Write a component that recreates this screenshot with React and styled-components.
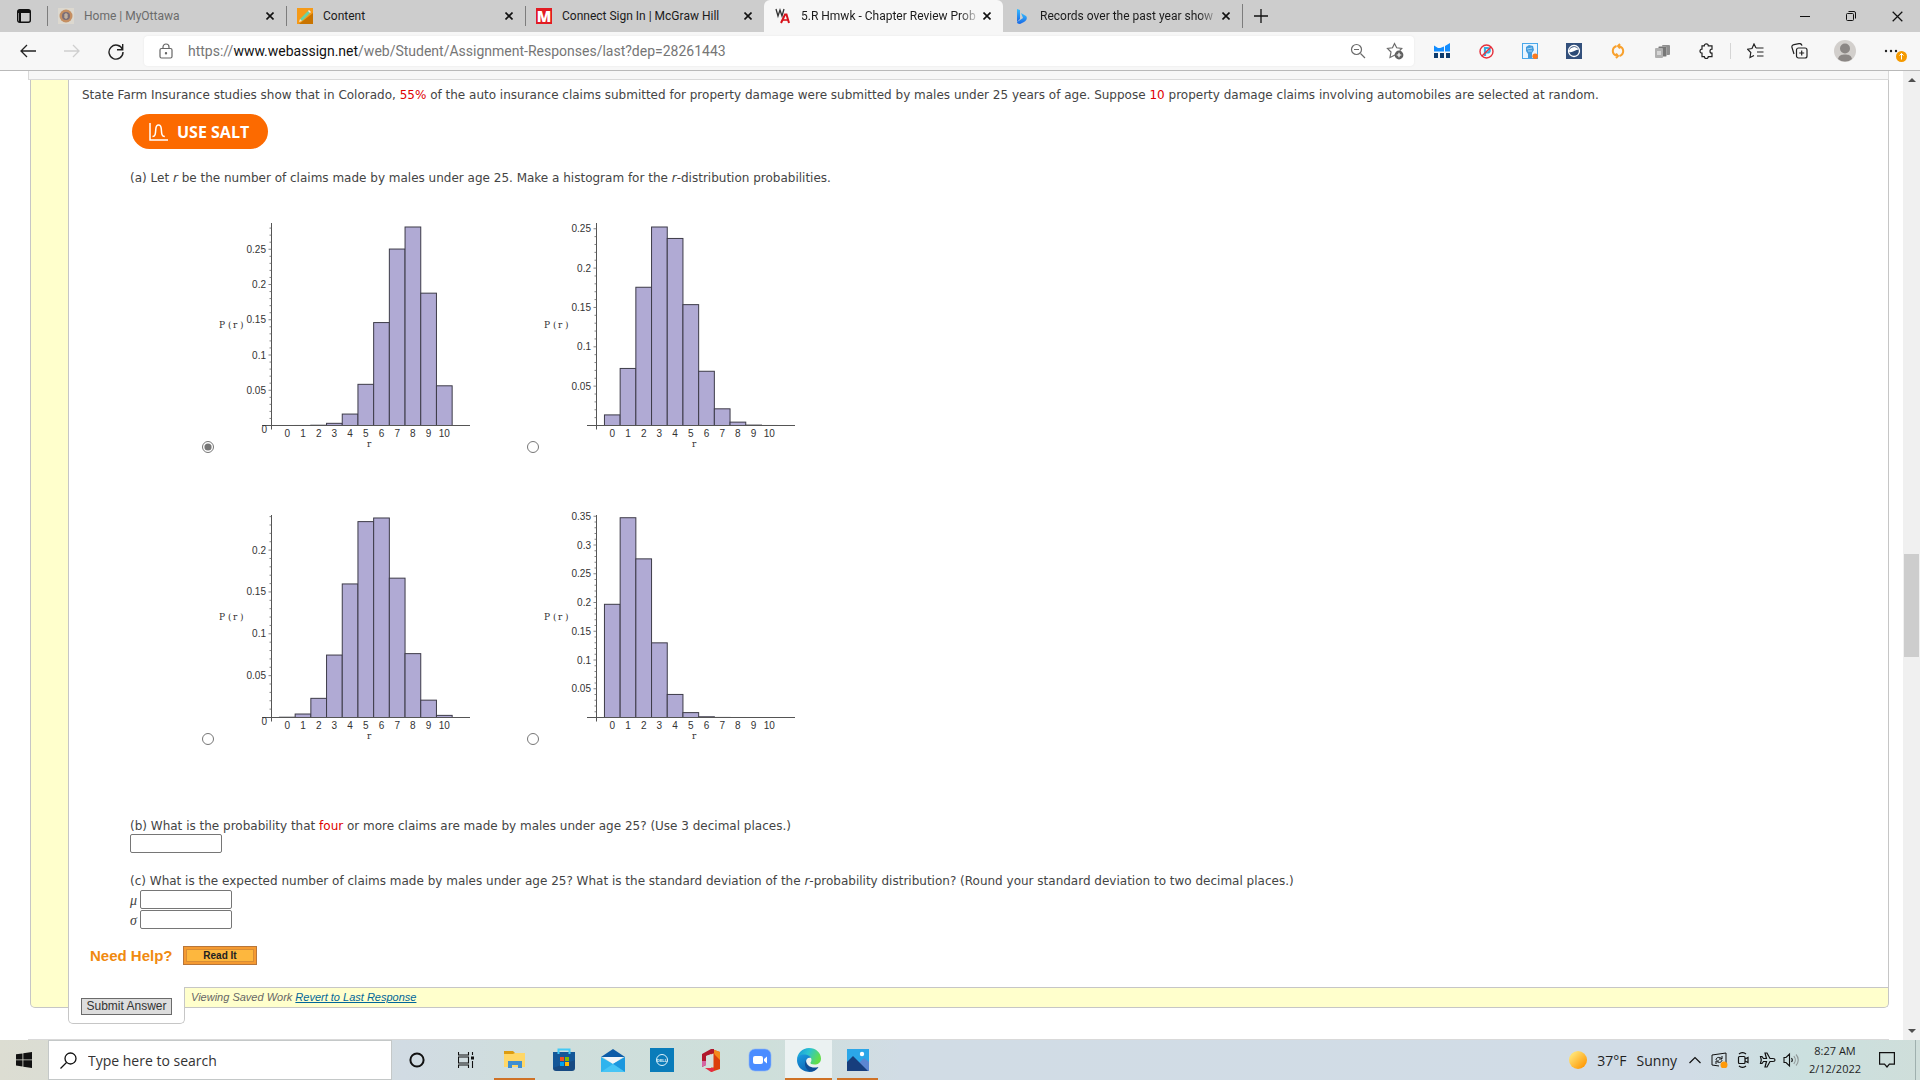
import React, { useState } from "react";
import styled, { createGlobalStyle } from "styled-components";

const GlobalStyle = createGlobalStyle`
  * {
    box-sizing: border-box;
  }
  body {
    margin: 0;
    background-color: white;
    font-family: "Open Sans", "Noto Sans", sans-serif;
  }
  button {
    font-family: inherit;
    padding: 0;
    border: none;
    background: none;
    cursor: pointer;
  }
  svg {
    display: block;
    flex-shrink: 0;
  }
`;

const Screen = styled.div`
  display: flex;
  flex-direction: column;
  min-height: 100vh;
`;

/* browser */
const TabStrip = styled.div`
  display: flex;
  align-items: center;
  height: 32px;
  background-color: #cdcdcd;
`;

const StripButton = styled.button`
  display: flex;
  align-items: center;
  justify-content: center;
  width: ${(props) => props.$width}px;
  height: 32px;
`;

const Tab = styled.div`
  display: flex;
  align-items: center;
  flex: 0 1 239px;
  min-width: 0;
  height: ${(props) => (props.$active ? "32px" : "20px")};
  padding: 0 10px;
  border-left: 1px solid ${(props) => (props.$line ? "#7d7d7d" : "transparent")};
  border-radius: ${(props) => (props.$active ? "6px 6px 0 0" : "0")};
  background-color: ${(props) => (props.$active ? "#f7f7f7" : "transparent")};
`;

const TabTitle = styled.button`
  flex: 1;
  min-width: 0;
  margin-left: 10px;
  overflow: hidden;
  white-space: nowrap;
  text-align: left;
  font-family: Roboto, sans-serif;
  font-size: 12px;
  line-height: 18px;
  color: ${(props) => (props.$dim ? "#6b6b6b" : "#1b1b1b")};
  mask-image: ${(props) =>
    props.$fade ? "linear-gradient(to right, black 88%, transparent)" : "none"};
`;

const CloseButton = styled.button`
  display: flex;
  align-items: center;
  justify-content: center;
  width: 12px;
  height: 16px;
`;

const NewTab = styled.div`
  display: flex;
  align-items: center;
  height: 24px;
  border-left: 1px solid #7d7d7d;
`;

const WindowButtons = styled.div`
  display: flex;
  margin-left: auto;
`;

const Toolbar = styled.div`
  display: flex;
  align-items: center;
  height: 39px;
  padding: 0 7px 0 6px;
  background-color: #f7f7f7;
  border-bottom: 1px solid #b9b9b9;
`;

const ToolButton = styled.button`
  position: relative;
  display: flex;
  align-items: center;
  justify-content: center;
  width: ${(props) => (props.$wide ? "48px" : "44px")};
  height: 32px;
`;

const AddressBar = styled.div`
  display: flex;
  align-items: center;
  flex: 1;
  height: 30px;
  margin: 0 6px;
  padding: 0 10px 0 15px;
  border-radius: 4px;
  background-color: white;
  box-shadow: 0 0 2px #e4e4e4;
`;

const Url = styled.div`
  flex: 1;
  margin-left: 15px;
  font-family: Roboto, sans-serif;
  font-size: 14px;
  line-height: 20px;
  color: #767676;

  b {
    font-weight: normal;
    color: #111;
  }
`;

const AddressButton = styled.button`
  width: 18px;
  margin-left: 18px;
`;

const ToolDivider = styled.div`
  width: 1px;
  height: 16px;
  margin: 0 2px;
  background-color: #d5d5d5;
`;

const UpdateBadge = styled.span`
  position: absolute;
  right: 6px;
  bottom: 5px;
`;

/* page */
const Viewport = styled.div`
  display: flex;
  flex: 1;
`;

const Page = styled.main`
  display: flex;
  flex-direction: column;
  flex: 1;
  min-width: 0;
  padding: 0 14px 0 28px;
  font-family: Verdana, "DejaVu Sans", sans-serif;
  font-size: 12px;
  line-height: 16px;
  color: #444;
`;

const QuestionHeader = styled.div`
  height: 9px;
  background-color: #f7f7f7;
  border: 1px solid #d9d9d9;
  border-top: none;
`;

const Question = styled.section`
  margin: 0 0 16px 2px;
  padding-left: 37px;
  border: 1px solid #c6c6c6;
  border-top: none;
  border-radius: 0 0 5px 5px;
  background-color: #ffffcc;
`;

const Panel = styled.div`
  padding: 7px 0 22px 13px;
  border-left: 1px solid #c6c6c6;
  background-color: white;
`;

const Indent = styled.div`
  padding-left: 48px;
`;

const Text = styled.p`
  margin: ${(props) => props.$top || 0}px 0 0;
`;

const Red = styled.span`
  color: #e00000;
`;

const SaltButton = styled.button`
  display: flex;
  align-items: center;
  width: 136px;
  height: 35px;
  margin: 11px 0 0 2px;
  padding-left: 17px;
  border-radius: 18px;
  background-color: #fc6a00;
  font-family: "Open Sans", sans-serif;
  font-size: 16px;
  line-height: 20px;
  font-weight: bold;
  color: white;

  svg {
    margin-right: 9px;
  }
`;

const Choices = styled.div`
  display: grid;
  grid-template-columns: 325px 325px;
  row-gap: 50px;
  margin: 25px 0 73px 72px;
`;

const Choice = styled.label`
  display: flex;
  align-items: flex-end;
`;

const Radio = styled.input`
  width: 12px;
  height: 12px;
  margin: 0 2px 0 0;
  accent-color: #767676;
`;

const Answer = styled.input`
  display: block;
  width: 92px;
  height: 19px;
  border: 1px solid #767676;
  border-radius: 2px;
  padding: 1px 2px;
  font-size: 12px;
  background-color: white;
`;

const SymbolRow = styled.div`
  display: flex;
  align-items: center;
  height: 20px;
`;

const Symbol = styled.label`
  width: 10px;
  padding-top: 4px;
  font-family: "Liberation Serif", serif;
  font-style: italic;
  font-size: 14px;
`;

const Help = styled.div`
  display: flex;
  align-items: center;
  margin: 17px 0 0 8px;
  height: 19px;
`;

const HelpTitle = styled.span`
  width: 93px;
  font-family: "Liberation Sans", Arial, sans-serif;
  font-size: 15px;
  font-weight: bold;
  color: #f08a10;
`;

const ReadButton = styled.button`
  width: 74px;
  height: 19px;
  border: 1px solid #b8763a;
  background-color: #fdb73e;
  box-shadow: inset 0 0 0 2px #f59a31, inset 0 0 0 3px #d98d34;
  font-family: "Liberation Sans", Arial, sans-serif;
  font-size: 10px;
  font-weight: bold;
  color: #222;
`;

const QuestionFooter = styled.div`
  display: flex;
  align-items: flex-start;
  height: 20px;
`;

const SubmitArea = styled.div`
  width: 117px;
  height: 37px;
  padding: 11px 12px 0;
  border: 1px solid #c6c6c6;
  border-top: none;
  border-radius: 0 0 5px 5px;
  background-color: white;
`;

const SubmitButton = styled.button`
  width: 91px;
  height: 17px;
  border: 1px solid #6b6b6b;
  background-color: #dddddd;
  font-family: "Liberation Sans", Arial, sans-serif;
  font-size: 12px;
  line-height: 15px;
  color: #333;
`;

const SavedWork = styled.div`
  flex: 1;
  height: 20px;
  padding: 1px 6px 0;
  border-top: 1px solid #c6c6c6;
  font-family: "Liberation Sans", Arial, sans-serif;
  font-style: italic;
  font-size: 11px;
  color: #666;

  a {
    color: #006699;
  }
`;

const NextQuestion = styled.div`
  height: 1px;
  margin-top: auto;
  background-color: #d9d9d9;
`;

const Scrollbar = styled.div`
  display: grid;
  grid-template-rows: 17px 466fr 103fr 366fr 17px;
  justify-items: center;
  align-items: center;
  width: 17px;
  background-color: #f0f0f0;
`;

const Thumb = styled.div`
  grid-row: 3;
  width: 15px;
  height: 100%;
  background-color: #cdcdcd;
`;

const ArrowDown = styled.svg`
  grid-row: 5;
`;

/* taskbar */
const Taskbar = styled.footer`
  display: flex;
  align-items: stretch;
  height: 40px;
  background: linear-gradient(
    to right,
    #dcddd2 0%,
    #d3dbdc 19%,
    #d1dbe3 21%,
    #cfdedc 28%,
    #cedfda 40%,
    #d1dce5 47%,
    #d1dce6 88%,
    #cbe0df 94%,
    #cfdeda 100%
  );
  color: #1f1f1f;
`;

const TaskButton = styled.button`
  display: flex;
  align-items: center;
  justify-content: center;
  width: 49px;
  border-top: 2px solid transparent;
  border-bottom: 2px solid transparent;
  background: ${(props) => (props.$active ? "#ebf2f2" : "none")};
  ${(props) =>
    props.$open &&
    `
    width: ${props.$active ? 47 : 41}px;
    margin: 0 ${props.$active ? 1 : 4}px;
    border-bottom-color: #cf7226;
  `}
`;

const StartButton = styled(TaskButton)`
  width: 48px;
`;

const SearchBox = styled.label`
  display: flex;
  align-items: center;
  width: 344px;
  padding-left: 11px;
  border: 1px solid #c4c8c8;
  background-color: white;
`;

const SearchInput = styled.input`
  flex: 1;
  min-width: 0;
  margin-left: 9px;
  border: none;
  outline: none;
  font-family: "Open Sans", "Noto Sans", sans-serif;
  font-size: 14px;

  &::placeholder {
    color: #333;
    opacity: 1;
  }
`;

const Tray = styled.div`
  display: flex;
  align-items: center;
  margin-left: auto;
`;

const Weather = styled.button`
  display: flex;
  align-items: center;
  gap: 10px;
  margin-right: 6px;
  font-size: 14px;
  color: #1f1f1f;
`;

const TrayButton = styled.button`
  display: flex;
  justify-content: center;
  width: 24px;
`;

const Clock = styled.div`
  width: 64px;
  margin-right: 8px;
  font-size: 11px;
  line-height: 18px;
  text-align: center;
`;

const ShowDesktop = styled.div`
  width: 5px;
  height: 40px;
  margin-left: 16px;
  border-left: 1px solid #9fb0ae;
`;

const CloseIcon = ({ size = 8, weight = 1.6 }) => (
  <svg width={size} height={size} viewBox="0 0 8 8">
    <path d="M0.5 0.5L7.5 7.5M7.5 0.5L0.5 7.5" stroke="#111" strokeWidth={weight} />
  </svg>
);

const SealIcon = () => (
  <svg width="16" height="16" viewBox="0 0 16 16">
    <rect width="16" height="16" fill="#dcd8cf" />
    <circle cx="8" cy="8" r="6.5" fill="#c58f62" />
    <circle cx="8" cy="8" r="4" fill="#7b6e78" />
    <path d="M8 5v6M6 7h4M6 9h4" stroke="#d9c5a8" />
  </svg>
);

const PencilIcon = () => (
  <svg width="16" height="16" viewBox="0 0 16 16">
    <rect width="16" height="16" fill="#f59a18" />
    <path d="M16 5v11H2z" fill="#c97400" />
    <path d="M3 11l8-8 2 2-8 8z" fill="#67d3a4" />
    <path d="M3 11l2 2-3 1z" fill="#f5e6c8" />
    <path d="M11 3l1-1 2 2-1 1z" fill="#eee" />
  </svg>
);

const LetterM = styled.span`
  width: 16px;
  height: 16px;
  flex-shrink: 0;
  background-color: #e21b22;
  color: white;
  font-size: 15px;
  line-height: 16px;
  font-weight: 800;
  text-align: center;
`;

const WebAssignIcon = () => (
  <svg width="16" height="16" viewBox="0 0 16 16" fill="none">
    <path d="M1 1l2 7 2-6 2 6 2-7" stroke="#333" strokeWidth="1.3" />
    <path d="M6 15L10 6.500h1.500L14 15" stroke="#d8121a" strokeWidth="2" />
    <path d="M8 12h5" stroke="#d8121a" strokeWidth="1.600" />
  </svg>
);

const BingIcon = () => (
  <svg width="16" height="16" viewBox="0 0 16 16">
    <defs>
      <linearGradient id="bing" x1="0" y1="0" x2="0" y2="1">
        <stop offset="0" stopColor="#37bdff" />
        <stop offset="1" stopColor="#1867e6" />
      </linearGradient>
    </defs>
    <path d="M3 1l3 1v9l-3 3z" fill="url(#bing)" />
    <path d="M7 5l5 3c2 2 0 5-2 6l-4 2c-2 0-3-1-3-2l6-4z" fill="url(#bing)" />
  </svg>
);

const AppIcons = {
  bars: (
    <svg width="16" height="16" viewBox="0 0 16 16">
      <path d="M0 2.500l4 2.500V8.500H0zM5 5.500l5-2v5H5zM4 5h2v3.500H4zM11 3l5-3v8.500h-5z" fill="#128dff" />
      <path d="M0 10h4v5H0zM6 10h4v5H6zM12 10h4v5h-4z" fill="#0c3b6e" />
    </svg>
  ),
  blocked: (
    <svg width="15" height="15" viewBox="0 0 15 15" fill="none">
      <path d="M6 12V4h2.500a2 2 0 0 1 0 4.500H6" stroke="#35aee2" strokeWidth="2.200" />
      <circle cx="7.500" cy="7.500" r="6.500" stroke="#e5303c" strokeWidth="1.400" />
      <path d="M12 3L3 12" stroke="#e5303c" strokeWidth="1.400" />
    </svg>
  ),
  fist: (
    <svg width="16" height="16" viewBox="0 0 16 16">
      <rect x="0.500" y="0.500" width="15" height="15" fill="#e9f5ff" stroke="#4aa8ea" />
      <path d="M4 4l3-2 4 1 1 4-2 3v5H6v-4L4 8z" fill="#459ddd" />
      <path d="M5 6l5-1M6 8l4 0" stroke="#d8eefc" strokeWidth="0.700" />
      <circle cx="13.200" cy="13.200" r="2.800" fill="#fb7a1e" />
    </svg>
  ),
  globe: (
    <svg width="16" height="16" viewBox="0 0 16 16">
      <rect width="16" height="16" fill="#33507c" />
      <circle cx="8" cy="8" r="5.500" fill="#2c4a75" stroke="white" strokeWidth="1.300" />
      <path d="M2.800 8.500c3 2.500 5.500-2 10-2a5.500 5.500 0 0 0-10 2z" fill="white" />
    </svg>
  ),
  ring: (
    <svg width="16" height="16" viewBox="0 0 16 16" fill="none" stroke="#f8a12e" strokeWidth="2">
      <path d="M6.500 3C3.800 4 2.800 6 2.800 8s1 4 4.500 5M6 10.500L8 13l-2 2M9.500 13c2.700-1 3.700-3 3.700-5s-1-4-4.500-5M10 5.500L8 3l2-2" />
    </svg>
  ),
  docs: (
    <svg width="15" height="15" viewBox="0 0 15 15">
      <rect x="7" y="1" width="8" height="10" rx="1" fill="#8f8f8f" />
      <rect x="3.500" y="2.500" width="8" height="10" rx="1" fill="#777" stroke="#b8b8b8" strokeWidth="0.600" />
      <rect x="0" y="4" width="8" height="10" rx="1" fill="#b0b0b0" />
      <path d="M2 7h4v4H2z" fill="#d6d6d6" />
    </svg>
  ),
  puzzle: (
    <svg width="16" height="16" viewBox="0 0 16 16" fill="none" stroke="#222" strokeWidth="1.200">
      <path d="M4 2.800h2.300a2 2 0 0 1 4 0H14v3.400a2 2 0 0 0 0 4v3.400h-3.700a2 2 0 0 1-4 0H4v-3.400a2 2 0 0 1 0-4z" />
    </svg>
  ),
  favorites: (
    <svg width="17" height="16" viewBox="0 0 17 16" fill="none" stroke="#222" strokeWidth="1.200">
      <path d="M9 5L7 1 5 5.500l-4.500.700 3.300 3.300L3 14.500l4-2M9 5h7.500M10 9h6.500M10 13h6.500" />
    </svg>
  ),
  collections: (
    <svg width="17" height="16" viewBox="0 0 17 16" fill="none" stroke="#222" strokeWidth="1.200">
      <rect x="5.500" y="5" width="10.500" height="10" rx="2" />
      <path d="M10.700 7.500v5M8.200 10h5M3 11L1 4.500C.5 3 1.500 2 3 1.600l5-1c1.500-.300 2.500 0 3 2" />
    </svg>
  ),
};

const Avatar = () => (
  <svg width="22" height="22" viewBox="0 0 22 22">
    <circle cx="11" cy="11" r="11" fill="#d2cfcc" />
    <circle cx="11" cy="8.500" r="5" fill="#8b8785" />
    <path d="M4 19c1-4 4-4.500 7-4.500s6 .500 7 4.500a11 11 0 0 1-14 0z" fill="#8b8785" />
  </svg>
);

// each chart covers r = 0..10, scale is pixels per unit of probability
const charts = [
  { p: 0.75, scale: 705, zero: true },
  { p: 0.35, scale: 787, zero: false },
  { p: 0.55, scale: 837, zero: true },
  { p: 0.15, scale: 575, zero: false },
];

const binomial = (n, k, p) => {
  let value = Math.pow(p, k) * Math.pow(1 - p, n - k);
  for (let i = 1; i <= k; i++) {
    value = (value * (n - k + i)) / i;
  }
  return value;
};

const Histogram = ({ p, scale, zero }) => {
  const base = 214.5;
  const axis = 55.5;
  const step = 15.7;
  const first = 71.3;
  const bars = Array.from({ length: 11 }, (_, r) => binomial(10, r, p));
  const ticks = Array.from({ length: 40 }, (_, i) => i + 1).filter(
    (i) => base - (i * scale) / 100 > 12
  );

  return (
    <svg width="280" height="242" viewBox="0 0 280 242" fontSize="10" fill="#333" fontFamily="Liberation Sans">
      {bars.map((value, r) => (
        <rect
          key={r}
          x={first + (r - 0.5) * step}
          y={base - value * scale}
          width={step}
          height={value * scale}
          fill="#b0aad4"
          stroke="#3d3b48"
        />
      ))}
      <path d={`M${axis} 12V${base + 4}M46 ${base}H254`} stroke="#555" />
      {ticks.map((i) => (
        <path
          key={i}
          d={`M${axis} ${base - (i * scale) / 100}h${i % 5 === 0 ? -3 : -2}`}
          stroke="#666"
          strokeWidth="0.800"
        />
      ))}
      {ticks
        .filter((i) => i % 5 === 0)
        .map((i) => (
          <text key={i} x="50" y={base + 3.5 - (i * scale) / 100} textAnchor="end">
            {i / 100}
          </text>
        ))}
      {zero && (
        <text x="51" y="222" textAnchor="end">
          0
        </text>
      )}
      {bars.map((_, r) => (
        <text key={r} x={first + r * step} y="226" textAnchor="middle">
          {r}
        </text>
      ))}
      <g fontFamily="DejaVu Serif" fontSize="9">
        <text x="3" y="117">P</text>
        <text x="12 17 24" y="117">(r)</text>
        <text x="151" y="236">r</text>
      </g>
    </svg>
  );
};

const TaskIcons = {
  start: (
    <svg width="16" height="16" viewBox="0 0 16 16">
      <path d="M0 2.300L6.500 1.400V7.500H0zM7.300 1.300L16 0v7.500H7.300zM0 8.300h6.500v6.200L0 13.600zM7.300 8.300H16V16l-8.700-1.300z" fill="#111" />
    </svg>
  ),
  cortana: (
    <svg width="16" height="16" viewBox="0 0 16 16">
      <circle cx="8" cy="8" r="6.600" fill="none" stroke="#111" strokeWidth="2" />
    </svg>
  ),
  view: (
    <svg width="16" height="16" viewBox="0 0 16 16" fill="none" stroke="#111" strokeWidth="1.100">
      <path d="M.5 0v3h10V0M.5 16v-3h10v3M.5 5h10v6H.5zM14.500 0v3M14.500 9v7" />
      <path d="M13 4.500h3v3h-3z" fill="#111" stroke="none" />
    </svg>
  ),
  folder: (
    <svg width="22" height="20" viewBox="0 0 22 20">
      <path d="M0 1h9l2 2h10v6H0z" fill="#dc9c12" />
      <path d="M0 4h9l2-1h10v14H0z" fill="#ffd767" />
      <path d="M4 11h14v7h-4v-3H8v3H4z" fill="#3f8fd2" />
    </svg>
  ),
  store: (
    <svg width="24" height="24" viewBox="0 0 24 24">
      <path d="M1 4h22v16a3 3 0 0 1-3 3H4a3 3 0 0 1-3-3z" fill="#174a82" />
      <path d="M1 4h22v8L1 20z" fill="#1260a7" opacity=".600" />
      <path d="M8 9h4v4H8z" fill="#f25022" />
      <path d="M13 9h4v4h-4z" fill="#7fba00" />
      <path d="M8 14h4v4H8z" fill="#00a4ef" />
      <path d="M13 14h4v4h-4z" fill="#ffb900" />
      <path d="M6.500 6V1.500h11V6" fill="none" stroke="#43c9f5" strokeWidth="2" />
    </svg>
  ),
  mail: (
    <svg width="24" height="23" viewBox="0 0 24 23">
      <path d="M0 8L12 0l12 8z" fill="#0d5ca8" />
      <path d="M2 8h20l-10 7z" fill="#f4f7fa" />
      <path d="M0 8l12 7 12-7v15H0z" fill="#2fb4ee" />
      <path d="M24 8v15L12 15z" fill="#1c97de" />
      <path d="M0 23l12-8 12 8z" fill="#47c5f5" />
    </svg>
  ),
  dell: (
    <svg width="24" height="24" viewBox="0 0 24 24">
      <rect width="24" height="24" fill="#0a7cba" />
      <circle cx="12" cy="12" r="5.500" fill="none" stroke="#e0f2fb" />
      <text x="12" y="13.500" fontSize="4" fontWeight="bold" textAnchor="middle" fill="#e0f2fb" fontFamily="Liberation Sans">DELL</text>
    </svg>
  ),
  office: (
    <svg width="18" height="23" viewBox="0 0 18 23">
      <path d="M9 0l9 3v17l-9 3z" fill="#dc3e0b" />
      <path d="M10 0l8 3v8l-5-5z" fill="#f48a1c" />
      <path d="M9 0L0 5v13l4-2V7l8-3V0z" fill="#b1172b" />
      <path d="M0 12v6l4-2v-4z" fill="#d565a3" />
      <path d="M3 19h9v3l-3 1z" fill="#e62c44" />
      <path d="M4.500 7l7-2.500v14h-7z" fill="#d5dfdc" />
    </svg>
  ),
  zoom: (
    <svg width="24" height="24" viewBox="0 0 24 24">
      <rect x="1" y="1" width="22" height="22" rx="6" fill="#4a8cff" stroke="#8db5f5" strokeWidth=".600" />
      <rect x="5" y="8" width="10" height="8" rx="2" fill="white" />
      <path d="M16 11l3-2.500v7L16 13z" fill="white" />
    </svg>
  ),
  edge: (
    <svg width="24" height="24" viewBox="0 0 24 24">
      <defs>
        <linearGradient id="edgeTop" x1="0" y1="0" x2="1" y2="0.400">
          <stop offset="0" stopColor="#1493d8" />
          <stop offset="0.500" stopColor="#2cc3d2" />
          <stop offset="1" stopColor="#62de4c" />
        </linearGradient>
        <linearGradient id="edgeBody" x1="0" y1="0" x2="0.600" y2="1">
          <stop offset="0" stopColor="#1b9de2" />
          <stop offset="1" stopColor="#0c62b0" />
        </linearGradient>
      </defs>
      <path d="M0 12C0 5 5.500 0 12 0c7 0 12 5 12 10.500 0 4-3 6-6.500 6-3 0-4.500-1-4-2 2-2 1-7-4-7C5 7.500 1 9 0 12z" fill="url(#edgeTop)" />
      <path d="M0 12c.500-4 4-6 8.500-5.500 3 .300 5 2 5.500 3.500-3-1-5 1-5 4 0 5 5 8 12 5.500C17 25 11 24.500 7 22.800 2 20.500 0 16 0 12z" fill="url(#edgeBody)" />
      <path d="M9 12c-3 5 1 11 5 11.500 3 0 6-2 7.500-4.500C15 21 9 18 9 12z" fill="#104e96" />
    </svg>
  ),
  photos: (
    <svg width="22" height="22" viewBox="0 0 22 22">
      <rect width="22" height="22" fill="#2ba6e8" />
      <path d="M11 15l6-6 5 4v9H11z" fill="#5c86d2" />
      <path d="M0 13l6-6 15 15H0z" fill="#173e7d" />
      <circle cx="15" cy="5" r="2.200" fill="white" />
    </svg>
  ),
};

const trayIcons = [
  {
    name: "Show hidden icons",
    icon: (
      <svg width="14" height="16" viewBox="0 0 14 16" fill="none" stroke="#111" strokeWidth="1.200">
        <path d="M1.500 11L7 5.500l5.500 5.500" />
      </svg>
    ),
  },
  {
    name: "Updates",
    icon: (
      <svg width="17" height="16" viewBox="0 0 17 16" fill="none" stroke="#111">
        <path d="M1 3l14-2v10M8 14l-7-1V3" />
        <path d="M5 8c0-3 4-3.500 6-1M11 4v3H8M11 8c0 2-3 3.500-5 1.500M5 12V9h3" />
        <circle cx="13" cy="13" r="3.500" fill="#ff9a0a" stroke="none" />
      </svg>
    ),
  },
  {
    name: "Meet Now",
    icon: (
      <svg width="12" height="16" viewBox="0 0 12 16" fill="none" stroke="#111" strokeWidth="1.200">
        <rect x="1.500" y="4.500" width="6.500" height="7" rx="1" />
        <path d="M8 7l3-1.500v5L8 9M2 2c2-1.600 5-1.600 7 0M2 14c2 1.600 5 1.600 7 0" />
      </svg>
    ),
  },
  {
    name: "Airplane mode",
    icon: (
      <svg width="17" height="16" viewBox="0 0 17 16" fill="none" stroke="#111" strokeWidth="1.200">
        <path d="M16 8c0 1-1 1.500-2 1.500h-3L8 15H6l1.500-5.500h-3L3 11.500H1.500L2.300 8l-.8-3.500H3l1.500 2h3L6 1h2l3 5.500h3c1 0 2 .5 2 1.500z" />
      </svg>
    ),
  },
  {
    name: "Volume",
    icon: (
      <svg width="17" height="16" viewBox="0 0 17 16" fill="none" stroke="#111" strokeWidth="1.100">
        <path d="M1 5.500h2L6.500 2v12L3 10.500H1zM8.500 6c1 1.200 1 2.800 0 4" />
        <path d="M10.800 4.200c2 2.200 2 5.400 0 7.600M13 2.500c3 3.200 3 7.800 0 11" stroke="#909898" />
      </svg>
    ),
  },
];

const tabs = [
  { title: "Home | MyOttawa", icon: <SealIcon />, dim: true, line: true },
  { title: "Content", icon: <PencilIcon />, line: true },
  { title: "Connect Sign In | McGraw Hill", icon: <LetterM>M</LetterM>, line: true },
  { title: "5.R Hmwk - Chapter Review Prob", icon: <WebAssignIcon />, active: true, fade: true },
  { title: "Records over the past year show", icon: <BingIcon />, fade: true },
];

const taskApps = [
  { name: "Cortana", icon: TaskIcons.cortana },
  { name: "Task View", icon: TaskIcons.view },
  { name: "File Explorer", icon: TaskIcons.folder, open: true },
  { name: "Microsoft Store", icon: TaskIcons.store },
  { name: "Mail", icon: TaskIcons.mail },
  { name: "Dell", icon: TaskIcons.dell },
  { name: "Office", icon: TaskIcons.office },
  { name: "Zoom", icon: TaskIcons.zoom },
  { name: "Microsoft Edge", icon: TaskIcons.edge, open: true, active: true },
  { name: "Photos", icon: TaskIcons.photos, open: true },
];

const Browser = () => (
  <header>
    <TabStrip>
      <StripButton $width={47} aria-label="Tab actions">
        <svg width="14" height="14" viewBox="0 0 14 14">
          <rect x="0.700" y="0.700" width="12.600" height="12.600" rx="2" fill="none" stroke="#111" strokeWidth="1.400" />
          <path d="M1 1h12v3H4v9H2V4H1z" fill="#111" />
        </svg>
      </StripButton>
      {tabs.map((tab) => (
        <Tab key={tab.title} $active={tab.active} $line={tab.line}>
          {tab.icon}
          <TabTitle $dim={tab.dim} $fade={tab.fade}>{tab.title}</TabTitle>
          <CloseButton aria-label="Close tab">
            <CloseIcon />
          </CloseButton>
        </Tab>
      ))}
      <NewTab>
        <StripButton $width={36} aria-label="New tab">
          <svg width="14" height="14" viewBox="0 0 14 14">
            <path d="M7 0v14M0 7h14" stroke="#111" strokeWidth="1.300" />
          </svg>
        </StripButton>
      </NewTab>
      <WindowButtons>
        <StripButton $width={46} aria-label="Minimize">
          <svg width="10" height="10" viewBox="0 0 10 10">
            <path d="M0 5.500h10" stroke="#111" />
          </svg>
        </StripButton>
        <StripButton $width={46} aria-label="Restore">
          <svg width="10" height="10" viewBox="0 0 10 10" fill="none" stroke="#111">
            <rect x="0.500" y="2.500" width="7" height="7" rx="1" />
            <path d="M2.500 .5H8a1.500 1.500 0 0 1 1.500 1.500v5.500" />
          </svg>
        </StripButton>
        <StripButton $width={46} aria-label="Close">
          <CloseIcon size={11} weight={0.9} />
        </StripButton>
      </WindowButtons>
    </TabStrip>
    <Toolbar>
      <ToolButton aria-label="Back">
        <svg width="16" height="14" viewBox="0 0 16 14" fill="none" stroke="#222" strokeWidth="1.300">
          <path d="M16 7H1M7 1L1 7l6 6" />
        </svg>
      </ToolButton>
      <ToolButton aria-label="Forward">
        <svg width="16" height="14" viewBox="0 0 16 14" fill="none" stroke="#cfcfcf" strokeWidth="1.300">
          <path d="M0 7h15M9 1l6 6-6 6" />
        </svg>
      </ToolButton>
      <ToolButton aria-label="Refresh">
        <svg width="16" height="17" viewBox="0 0 16 17" fill="none" stroke="#222" strokeWidth="1.400">
          <path d="M14.500 6.500A7 7 0 1 0 15 9M14.700 1v5.700H9" />
        </svg>
      </ToolButton>
      <AddressBar>
        <svg width="14" height="16" viewBox="0 0 14 16" fill="none" stroke="#666" strokeWidth="1.200">
          <rect x="1" y="5.500" width="12" height="9.500" rx="1.500" />
          <path d="M4 5.500V4a3 3 0 0 1 6 0v1.500" />
          <circle cx="7" cy="10.200" r="0.600" fill="#666" />
        </svg>
        <Url>
          https://<b>www.webassign.net</b>/web/Student/Assignment-Responses/last?dep=28261443
        </Url>
        <AddressButton aria-label="Zoom">
          <svg width="16" height="16" viewBox="0 0 16 16" fill="none" stroke="#6b6b6b" strokeWidth="1.200">
            <circle cx="6.500" cy="6.500" r="5" />
            <path d="M10.500 10.500L15 15M4 6.500h5" />
          </svg>
        </AddressButton>
        <AddressButton aria-label="Add to favorites">
          <svg width="18" height="18" viewBox="0 0 18 18" fill="none" stroke="#6b6b6b" strokeWidth="1.200">
            <path d="M9 13l-5 2.500 1-5.500L1.500 6.500l5-.700L8.500 1.500l2.200 4.300 5 .700-2 2" />
            <circle cx="13" cy="13" r="4.400" fill="#606060" stroke="none" />
            <path d="M13 10.700v4.600M10.700 13h4.600" stroke="white" />
          </svg>
        </AddressButton>
      </AddressBar>
      {["bars", "blocked", "fist", "globe", "ring", "docs", "puzzle"].map((name) => (
        <ToolButton key={name} aria-label={name}>
          {AppIcons[name]}
        </ToolButton>
      ))}
      <ToolDivider />
      <ToolButton aria-label="Favorites">{AppIcons.favorites}</ToolButton>
      <ToolButton aria-label="Collections">{AppIcons.collections}</ToolButton>
      <ToolButton $wide aria-label="Profile">
        <Avatar />
      </ToolButton>
      <ToolButton aria-label="Settings">
        <svg width="14" height="4" viewBox="0 0 14 4" fill="#222">
          <circle cx="2" cy="2" r="1.200" />
          <circle cx="7" cy="2" r="1.200" />
          <circle cx="12" cy="2" r="1.200" />
        </svg>
        <UpdateBadge>
          <svg width="11" height="11" viewBox="0 0 11 11">
            <circle cx="5.500" cy="5.500" r="5.500" fill="#f59a00" />
            <path d="M5.500 8.500v-6M3.500 4.500l2-2 2 2" stroke="white" fill="none" />
          </svg>
        </UpdateBadge>
      </ToolButton>
    </Toolbar>
  </header>
);

const App = () => {
  const [choice, setChoice] = useState(0);

  return (
    <Screen>
      <GlobalStyle />
      <Browser />
      <Viewport>
        <Page>
          <QuestionHeader />
          <Question>
            <Panel>
              <Text>
                State Farm Insurance studies show that in Colorado, <Red>55%</Red> of the auto insurance
                claims submitted for property damage were submitted by males under 25 years of age. Suppose{" "}
                <Red>10</Red> property damage claims involving automobiles are selected at random.
              </Text>
              <Indent>
                <SaltButton>
                  <svg width="19" height="18" viewBox="0 0 19 18" fill="none" stroke="white" strokeWidth="1.500">
                    <path d="M1 0v17h18M3.500 13.500c3 0 3-3 3.300-7.500.300-5.500 5.200-5.500 5.500 0 .300 4.500.300 7.500 3.500 7.500" />
                  </svg>
                  USE SALT
                </SaltButton>
                <Text $top={21}>
                  (a) Let <i>r</i> be the number of claims made by males under age 25. Make a histogram for
                  the <i>r</i>-distribution probabilities.
                </Text>
                <Choices>
                  {charts.map((chart, index) => (
                    <Choice key={chart.p}>
                      <Radio
                        type="radio"
                        name="histogram"
                        checked={choice === index}
                        onChange={() => setChoice(index)}
                      />
                      <Histogram {...chart} />
                    </Choice>
                  ))}
                </Choices>
                <Text as="label" htmlFor="partB">
                  (b) What is the probability that <Red>four</Red> or more claims are made by males under age
                  25? (Use 3 decimal places.)
                </Text>
                <Answer id="partB" type="text" />
                <Text $top={20}>
                  (c) What is the expected number of claims made by males under age 25? What is the standard
                  deviation of the <i>r</i>-probability distribution? (Round your standard deviation to two
                  decimal places.)
                </Text>
                <SymbolRow>
                  <Symbol htmlFor="mu">μ</Symbol>
                  <Answer id="mu" type="text" />
                </SymbolRow>
                <SymbolRow>
                  <Symbol htmlFor="sigma">σ</Symbol>
                  <Answer id="sigma" type="text" />
                </SymbolRow>
              </Indent>
              <Help>
                <HelpTitle>Need Help?</HelpTitle>
                <ReadButton>Read It</ReadButton>
              </Help>
            </Panel>
            <QuestionFooter>
              <SubmitArea>
                <SubmitButton>Submit Answer</SubmitButton>
              </SubmitArea>
              <SavedWork>
                Viewing Saved Work <a href="#last">Revert to Last Response</a>
              </SavedWork>
            </QuestionFooter>
          </Question>
          <NextQuestion />
        </Page>
        <Scrollbar>
          <svg width="8" height="5" viewBox="0 0 8 5">
            <path d="M0 5l4-4 4 4z" fill="#505050" />
          </svg>
          <Thumb />
          <ArrowDown width="8" height="5" viewBox="0 0 8 5">
            <path d="M0 0l4 4 4-4z" fill="#505050" />
          </ArrowDown>
        </Scrollbar>
      </Viewport>
      <Taskbar>
        <StartButton aria-label="Start">{TaskIcons.start}</StartButton>
        <SearchBox>
          <svg width="17" height="17" viewBox="0 0 17 17" fill="none" stroke="#111" strokeWidth="1.300">
            <circle cx="10.500" cy="6.500" r="5.500" />
            <path d="M6.500 10.500L.5 16.500" />
          </svg>
          <SearchInput type="text" aria-label="Search" placeholder="Type here to search" />
        </SearchBox>
        {taskApps.map((app) => (
          <TaskButton key={app.name} aria-label={app.name} $open={app.open} $active={app.active}>
            {app.icon}
          </TaskButton>
        ))}
        <Tray>
          <Weather>
            <svg width="18" height="18" viewBox="0 0 18 18">
              <defs>
                <linearGradient id="sun" x1="0" y1="0" x2="1" y2="1">
                  <stop offset="0.200" stopColor="#ffe070" />
                  <stop offset="0.900" stopColor="#ff9500" />
                </linearGradient>
              </defs>
              <circle cx="9" cy="9" r="9" fill="url(#sun)" />
            </svg>
            <span>37°F</span>
            <span>Sunny</span>
          </Weather>
          {trayIcons.map((item) => (
            <TrayButton key={item.name} aria-label={item.name}>
              {item.icon}
            </TrayButton>
          ))}
          <Clock>
            8:27 AM
            <br />
            2/12/2022
          </Clock>
          <TrayButton aria-label="Notifications">
            <svg width="16" height="16" viewBox="0 0 16 16" fill="none" stroke="#111" strokeWidth="1.200">
              <path d="M.6.600h14.800v11.500h-5L8 15l-2.500-2.900H.6z" />
            </svg>
          </TrayButton>
          <ShowDesktop />
        </Tray>
      </Taskbar>
    </Screen>
  );
};

export default App;
